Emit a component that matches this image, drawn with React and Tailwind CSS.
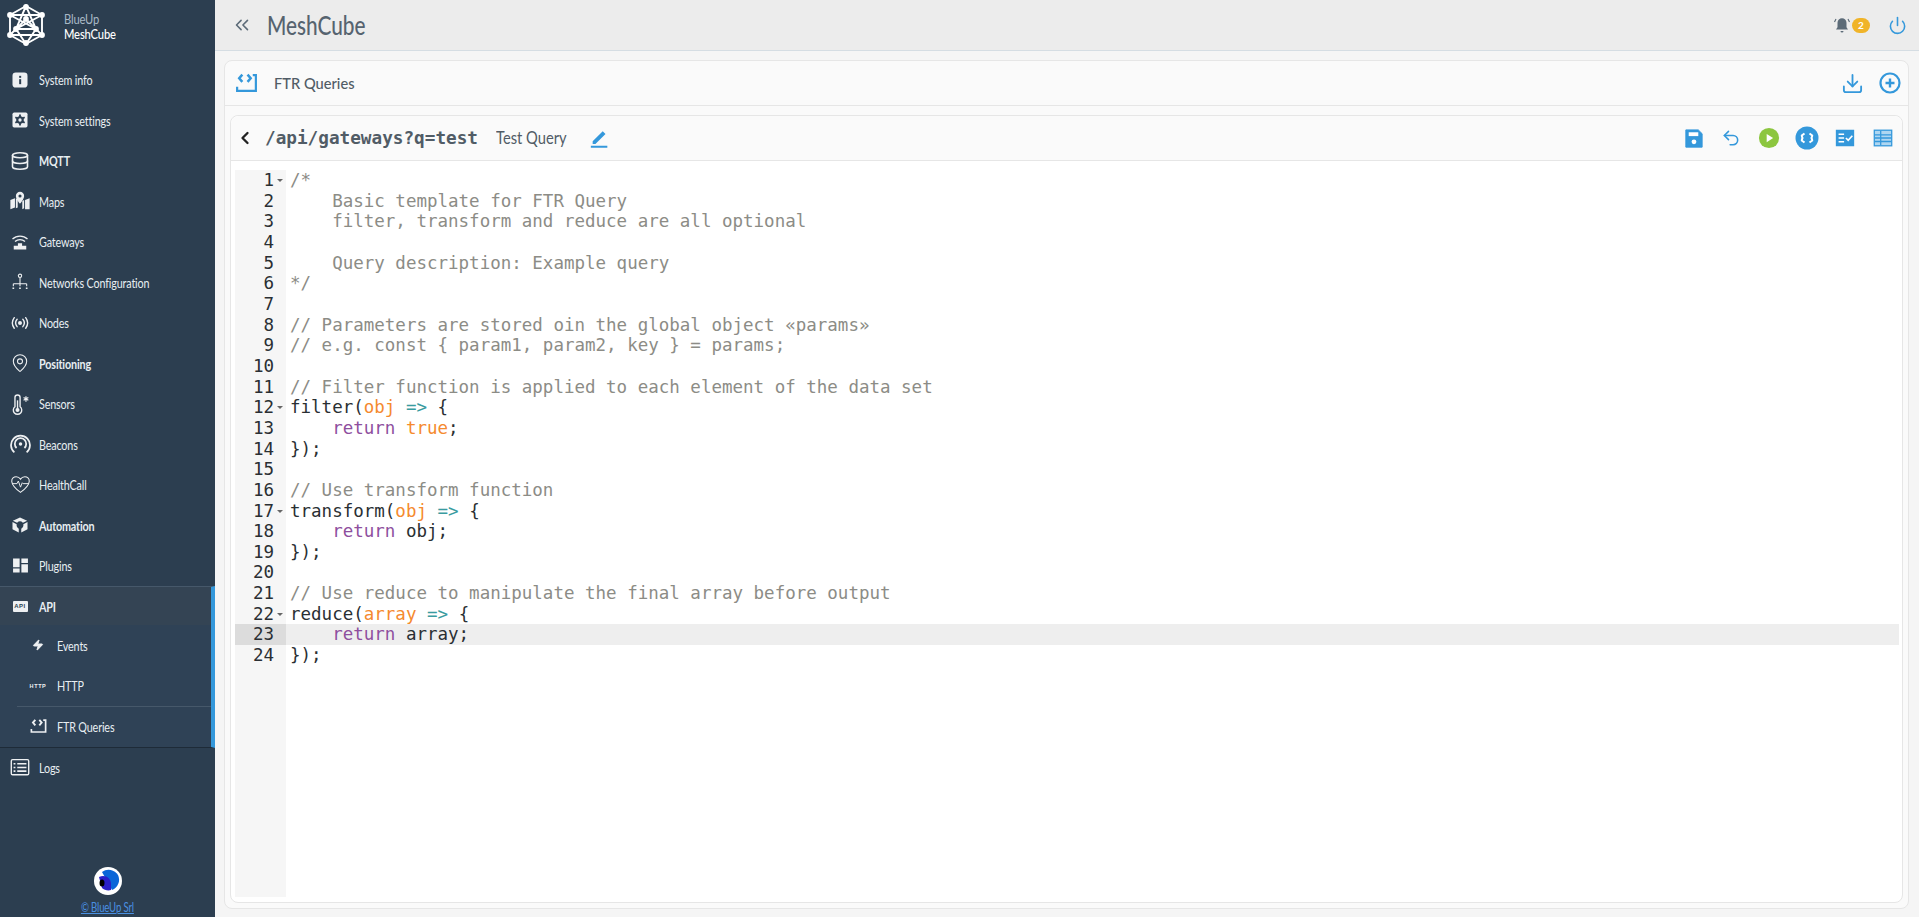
import React from "react";
import { Database, MapPin, Zap, Undo2, Download, Power, ChevronsLeft, ChevronLeft } from "lucide-react";

const W = "#eef0f2";
const Ic = ({ children, s = 20, vb = "0 0 24 24", className = "" }) => (
  <svg width={s} height={s} viewBox={vb} className={className} fill="none">{children}</svg>
);
const Info = () => <Ic><rect x="3" y="3" width="18" height="18" rx="4" fill={W}/><rect x="11" y="7" width="2.4" height="2.4" fill="#2c3e50"/><rect x="11" y="11" width="2.4" height="6" fill="#2c3e50"/></Ic>;
const Settings = () => <Ic><rect x="3" y="3" width="18" height="18" rx="2" fill={W}/><circle cx="12" cy="12" r="4.6" fill="#2c3e50"/><path d="M12 5.500v13M6.400 8.700l11.200 6.600M6.400 15.300l11.200-6.600" stroke="#2c3e50" strokeWidth="2.200"/><circle cx="12" cy="12" r="2" fill={W}/></Ic>;
const MapsI = () => <Ic s={22}><path d="M1.500 21V11l5-2v10zM22.500 21V9l-5 2v10zM7.500 9l2 1v9l-2 1zM16.500 11l-2 1v9l2-1z" fill={W}/><path d="M12 2a4.500 4.500 0 0 0-4.500 4.500C7.500 10 12 15 12 15s4.500-5 4.500-8.500A4.500 4.500 0 0 0 12 2z" fill={W}/><circle cx="12" cy="6.500" r="1.700" fill="#2c3e50"/></Ic>;
const GatewayI = () => <Ic><path d="M3 8.500a13 13 0 0 1 18 0M6 11.500a9 9 0 0 1 12 0" stroke={W} strokeWidth="1.600"/><path d="M9.500 13.500h5v3h5v4.500h-15v-4.500h5z" fill={W}/></Ic>;
const NetI = () => <Ic><circle cx="12" cy="4.500" r="2" stroke={W} strokeWidth="1.300"/><path d="M12 7v7M4 14h16M4 14v3M12 14v3M20 14v3" stroke={W} strokeWidth="1.300"/><path d="M3 19.500h2M11 19.500h2M19 19.500h2" stroke={W} strokeWidth="1.800"/></Ic>;
const NodesI = () => <Ic s={22}><circle cx="12" cy="12" r="2.200" fill={W}/><path d="M8.500 7.500a7 7 0 0 0 0 9M15.500 7.500a7 7 0 0 1 0 9M5 5.500a11 11 0 0 0 0 13M19 5.500a11 11 0 0 1 0 13" stroke={W} strokeWidth="1.700" strokeLinecap="round" transform="translate(1.300 1.300) scale(.89)"/></Ic>;
const SensorI = () => <Ic s={22}><path d="M6.500 15V5a2.800 2.800 0 0 1 5.600 0v10a4.600 4.600 0 1 1-5.600 0z" stroke={W} strokeWidth="1.500"/><circle cx="9.300" cy="18.500" r="2.200" fill={W}/><path d="M9.300 18V8" stroke={W} strokeWidth="1.500"/><path d="M18.500 3.500v6M15.900 5l5.200 3M21.100 5l-5.200 3" stroke={W} strokeWidth="1.300"/></Ic>;
const BeaconI = () => <Ic s={21}><circle cx="12" cy="11.500" r="2" fill={W}/><path d="M7.500 16a6.500 6.500 0 1 1 9 0" stroke={W} strokeWidth="2"/><path d="M5 21a10.800 10.800 0 1 1 14 0" stroke={W} strokeWidth="2"/></Ic>;
const HealthI = () => <Ic s={21}><path d="M12 21C8 18 2.500 14 2 8.500 1.700 5 4.500 3.200 7 3.200c2.200 0 4 1.100 5 2.800 1-1.700 2.800-2.800 5-2.800 2.500 0 5.300 1.800 5 5.300C21.500 14 16 18 12 21z" stroke={W} strokeWidth="1.200"/><path d="M2.500 11H8l1.500-3 2.500 7 2-5 1 1h6.500" stroke={W} strokeWidth="1.100"/></Ic>;
const AutoI = () => <Ic><path d="M12 3l8.500 4-5 2.200a5 5 0 0 0-7 0L3.500 7z" fill={W}/><path d="M3 8.500l5 2.700a5 5 0 0 0 2.500 5.200V21L3 17zM21 8.500V17l-7.500 4v-4.600a5 5 0 0 0 2.500-5.200z" fill={W}/></Ic>;
const PluginsI = () => <Ic s={21}><path d="M3.500 4h7.500v10H3.500zM3.500 15.500h7.500V20H3.500zM13 4h7.500v5H13zM13 10.500h7.500V20H13z" fill={W}/></Ic>;
const ApiI = () => <span className="w-[15px] h-[11px] rounded-[1px] bg-[#eef0f2] text-[#2c3e50] text-[6px] font-bold tracking-[0.5px] flex items-center justify-center font-['Liberation_Sans',sans-serif]">API</span>;
const HttpI = () => <span className="text-[#eef0f2] text-[5.500px] font-bold tracking-[0.6px] font-['Liberation_Sans',sans-serif]">HTTP</span>;
const FtrI = ({ c = W, s = 20 }) => <Ic s={s}><path d="M8 3.500 5 7l3 3.500M13 3.500 16 7l-3 3.500" stroke={c} strokeWidth="2.400"/><path d="M18 4h3v15H3v-4" stroke={c} strokeWidth="2.100"/></Ic>;
const LogsI = () => <Ic s={22}><rect x="2.500" y="4" width="19" height="16.500" rx="1.500" stroke={W} strokeWidth="1.500"/><path d="M9 8.500h10M9 12.500h10M9 16.500h10M5 8.500h2M5 12.500h2M5 16.500h2" stroke={W} strokeWidth="1.800"/></Ic>;

const Logo = () => (
  <svg width="38" height="42" viewBox="0 0 38 42" fill="none" stroke="#fff" strokeWidth="1.900">
    <path d="M19 2 35 11 35 31 19 40 3 31 3 11zM19 2 9 25 29 25zM3 11 29 25M35 11 9 25M3 31 19 15 35 31 3 31M3 11h32M9 25l10 15 10-15"/>
    {[[19,3],[35,11],[35,31],[19,39],[3,31],[3,11],[19,15],[9,25],[29,25]].map(([x,y],i)=><circle key={i} cx={x} cy={y} r="2.900" fill="#fff" stroke="none"/>)}
  </svg>
);

const items = [
  ["System info", <Info/>], ["System settings", <Settings/>], ["MQTT", <Database size={20} color={W} strokeWidth={1.900}/>, 1],
  ["Maps", <MapsI/>], ["Gateways", <GatewayI/>], ["Networks Configuration", <NetI/>], ["Nodes", <NodesI/>],
  ["Positioning", <MapPin size={20} color={W} strokeWidth={1.300}/>, 1], ["Sensors", <SensorI/>], ["Beacons", <BeaconI/>],
  ["HealthCall", <HealthI/>], ["Automation", <AutoI/>, 1], ["Plugins", <PluginsI/>],
];

const lbl = "text-[14px] tracking-[-0.2px] text-[#e8eef2] origin-left scale-x-[.77] whitespace-nowrap";
const Row = ({ label, icon, bold, h = "h-[40.500px]" }) => (
  <div className={`${h} flex items-center shrink-0`}>
    <span className="w-[39px] flex justify-center pl-[1px] shrink-0">{icon}</span>
    <span className={`${lbl} ${bold ? "font-bold" : ""}`}>{label}</span>
  </div>
);
const Sub = ({ label, icon, border }) => (
  <div className={`h-[40.500px] flex items-center ml-[17px] ${border ? "border-t border-[#46586a]" : ""}`}>
    <span className="w-[40px] flex justify-center pl-[2px] shrink-0">{icon}</span>
    <span className={lbl}>{label}</span>
  </div>
);

const Sidebar = () => (
  <aside className="w-[215px] shrink-0 h-full bg-[#2c3e50] flex flex-col">
    <div className="h-[50px] flex items-center pl-[7px] shrink-0">
      <Logo/>
      <div className="ml-[19px] text-[14px] leading-[15px] tracking-[-0.2px] mt-[1px]">
        <div className="text-[#a9b9c6] origin-left scale-x-[.8]">BlueUp</div>
        <div className="text-white font-medium origin-left scale-x-[.8]">MeshCube</div>
      </div>
    </div>
    <div className="h-[9.500px] shrink-0"/>
    {items.map(([l, ic, b]) => <Row key={l} label={l} icon={ic} bold={b}/>)}
    <div className="h-[162px] border-y border-t-[#46586a] border-b-[#1e2b38] bg-[#344454] border-r-4 border-r-[#3498db] [border-right-style:solid] shrink-0">
      <Row label="API" icon={<ApiI/>} bold h="h-[38px]"/>
      <div className="bg-[#2f4256]">
        <Sub label="Events" icon={<Zap size={12} fill={W} color={W}/>}/>
        <Sub label="HTTP" icon={<HttpI/>}/>
        <Sub label="FTR Queries" icon={<FtrI s={19}/>} border/>
      </div>
    </div>
    <Row label="Logs" icon={<LogsI/>} h="h-[38px]"/>
    <div className="mt-auto flex flex-col items-center pb-[1px]">
      <svg width="28" height="28" viewBox="0 0 28 28" className="mb-[5px]">
        <circle cx="14" cy="14" r="14" fill="#fff"/>
        <path d="M8 5a11 11 0 0 1 16 3 11 11 0 0 1-6 15z" fill="#0a66d8"/>
        <path d="M5 10c6-3 12 1 12 7v6c-3 1-7 0-9-2z" fill="#2a20c8"/>
        <ellipse cx="8" cy="16" rx="2.500" ry="3.500" fill="#000"/>
      </svg>
      <a className="text-[12.500px] leading-[16px] tracking-[-0.2px] underline text-[#4a90e2] scale-x-[.77] whitespace-nowrap">© BlueUp Srl</a>
    </div>
  </aside>
);

const C = ({ c, children }) => <span className={c}>{children}</span>;
const cm = "text-[#8c8c86]", kw = "text-[#8e4f9e]", org = "text-[#f58a2e]", op = "text-[#3a9ba0]";
const lines = [
  <C c={cm}>{"/*"}</C>,
  <C c={cm}>{"    Basic template for FTR Query"}</C>,
  <C c={cm}>{"    filter, transform and reduce are all optional"}</C>,
  "",
  <C c={cm}>{"    Query description: Example query"}</C>,
  <C c={cm}>{"*/"}</C>,
  "",
  <C c={cm}>{"// Parameters are stored oin the global object «params»"}</C>,
  <C c={cm}>{"// e.g. const { param1, param2, key } = params;"}</C>,
  "",
  <C c={cm}>{"// Filter function is applied to each element of the data set"}</C>,
  <>filter(<C c={org}>obj</C> <C c={op}>{"=>"}</C> {"{"}</>,
  <>{"    "}<C c={kw}>return</C> <C c={org}>true</C>;</>,
  "});",
  "",
  <C c={cm}>{"// Use transform function"}</C>,
  <>transform(<C c={org}>obj</C> <C c={op}>{"=>"}</C> {"{"}</>,
  <>{"    "}<C c={kw}>return</C> obj;</>,
  "});",
  "",
  <C c={cm}>{"// Use reduce to manipulate the final array before output"}</C>,
  <>reduce(<C c={org}>array</C> <C c={op}>{"=>"}</C> {"{"}</>,
  <>{"    "}<C c={kw}>return</C> array;</>,
  "});",
];
const folds = [1, 12, 17, 22];

const Editor = () => (
  <div className="flex-1 min-h-0 ml-[4px] mr-[3px] mt-[9px] mb-[5px] flex font-['DejaVu_Sans_Mono',monospace] text-[17.500px] leading-[20.670px] text-[#2a2f33] overflow-hidden">
    <div className="w-[51px] shrink-0 bg-[#f6f6f6]">
      {lines.map((_, i) => (
        <div key={i} className={`h-[20.670px] relative text-right pr-[12px] ${i === 22 ? "bg-[#dcdcdc]" : ""}`}>
          {i + 1}
          {folds.includes(i + 1) && <span className="absolute right-[3px] top-[9px] w-0 h-0 border-x-[3px] border-x-transparent border-t-[3px] border-t-[#666]"/>}
        </div>
      ))}
    </div>
    <div className="flex-1 bg-white whitespace-pre min-w-0">
      {lines.map((l, i) => (
        <div key={i} className={`h-[20.670px] pl-[4px] ${i === 22 ? "bg-[#eeeeee]" : ""}`}>{l}</div>
      ))}
    </div>
  </div>
);

const B = "#3498db";
const Tool = ({ children }) => <span className="w-[38px] flex justify-center">{children}</span>;
const Toolbar = () => (
  <div className="ml-auto flex items-center">
    <Tool><Ic s={23}><path d="M4 3h13l4 4v14H4z" fill={B} stroke={B} strokeLinejoin="round"/><rect x="7" y="5.500" width="10" height="4" fill="#fff"/><circle cx="12.500" cy="15.500" r="2.500" fill="#fff"/></Ic></Tool>
    <Tool><Undo2 size={20} color={B} strokeWidth={1.900}/></Tool>
    <Tool><Ic s={22}><circle cx="12" cy="12" r="11" fill="#8cc63f"/><path d="M9.500 7.500v9l7-4.500z" fill="#fff"/></Ic></Tool>
    <Tool><Ic s={24}><circle cx="12" cy="12" r="11.500" fill={B}/><path d="M9.500 7.500 6.800 9.500c0 1 .700 2.500.700 2.500s-.700 1.500-.700 2.500l2.700 2M14.500 7.500l2.700 2c0 1-.700 2.500-.700 2.500s.700 1.500.700 2.500l-2.700 2" stroke="#fff" strokeWidth="2" fill="none"/></Ic></Tool>
    <Tool><Ic s={22}><rect x="2" y="3" width="20" height="18" fill={B}/><path d="M5 8h6M5 12h6M5 16h6" stroke="#fff" strokeWidth="1.600"/><path d="M13 12l2.500 2.500 4.500-5" stroke="#fff" strokeWidth="1.800"/></Ic></Tool>
    <Tool><Ic s={22}><rect x="2.500" y="3.500" width="19" height="17" fill="#aed6f1" stroke={B} strokeWidth="1.400"/><path d="M9.500 4v16M3 8.500h18M3 12h18M3 15.800h18" stroke={B} strokeWidth="1.400"/></Ic></Tool>
  </div>
);

export default function App() {
  return (
    <div className="w-[1919px] h-[917px] flex overflow-hidden bg-[#f5f5f5] font-['Lato',sans-serif]">
      <Sidebar/>
      <main className="flex-1 min-w-0 flex flex-col">
        <header className="h-[51px] shrink-0 bg-[#ececec] border-b border-[#d5dde3] flex items-center pl-[16px] pr-[12px]">
          <ChevronsLeft size={22} color="#5c6b78" strokeWidth={1.700}/>
          <span className="ml-[14px] text-[26px] font-medium text-[#56636f] origin-left scale-x-[.8] whitespace-nowrap">MeshCube</span>
          <div className="ml-auto flex items-center">
            <Ic s={18} className="mr-[1px]"><path d="M12 3a6 6 0 0 0-6 6v6l-2 3h16l-2-3V9a6 6 0 0 0-6-6zM10 20h4a2 2 0 0 1-4 0z" fill="#5c6b78"/><path d="M4 4 2 8M20 4l2 4" stroke="#5c6b78" strokeWidth="1.500"/></Ic>
            <span className="w-[18px] h-[15px] rounded-full bg-[#f0b429] text-white text-[10px] font-bold flex items-center justify-center">2</span>
            <Power size={19} color={B} className="ml-[18px]" strokeWidth={2}/>
          </div>
        </header>
        <section className="flex-1 min-h-0 mt-[9px] ml-[9px] mr-[10px] mb-[8px] border border-[#e6e6e6] rounded-[8px] bg-[#fafafa] flex flex-col">
          <div className="h-[45px] shrink-0 border-b border-[#e6e6e6] flex items-center pl-[9px] pr-[6px]">
            <FtrI c={B} s={25}/>
            <span className="ml-[15px] text-[16px] font-medium text-[#515c66] origin-left scale-x-[.915] whitespace-nowrap">FTR Queries</span>
            <div className="ml-auto flex items-center gap-[14px]">
              <Download size={23} color={B} strokeWidth={1.900}/>
              <Ic s={24}><circle cx="12" cy="12" r="9.500" stroke={B} strokeWidth="2.200"/><path d="M12 7.500v9M7.500 12h9" stroke={B} strokeWidth="2.400"/></Ic>
            </div>
          </div>
          <div className="flex-1 min-h-0 m-[5px] mt-[9px] border border-[#e6e6e6] rounded-[8px] bg-white flex flex-col">
            <div className="h-[45px] shrink-0 bg-[#fafafa] rounded-t-[8px] border-b border-[#e6e6e6] flex items-center pl-[4px]">
              <ChevronLeft size={20} color="#222" strokeWidth={2.800}/>
              <span className="ml-[10px] font-['DejaVu_Sans_Mono',monospace] font-bold text-[17.700px] text-[#515c66]">/api/gateways?q=test</span>
              <span className="ml-[18px] text-[17px] text-[#515c66] origin-left scale-x-[.865] whitespace-nowrap">Test Query</span>
              <Ic s={22} className="ml-[11px]"><path d="M4 15.500 15 4.500l3 3L7 18.500H4zM2 20.500h18v2.200H2z" fill={B}/></Ic>
              <Toolbar/>
            </div>
            <Editor/>
          </div>
        </section>
      </main>
    </div>
  );
}
